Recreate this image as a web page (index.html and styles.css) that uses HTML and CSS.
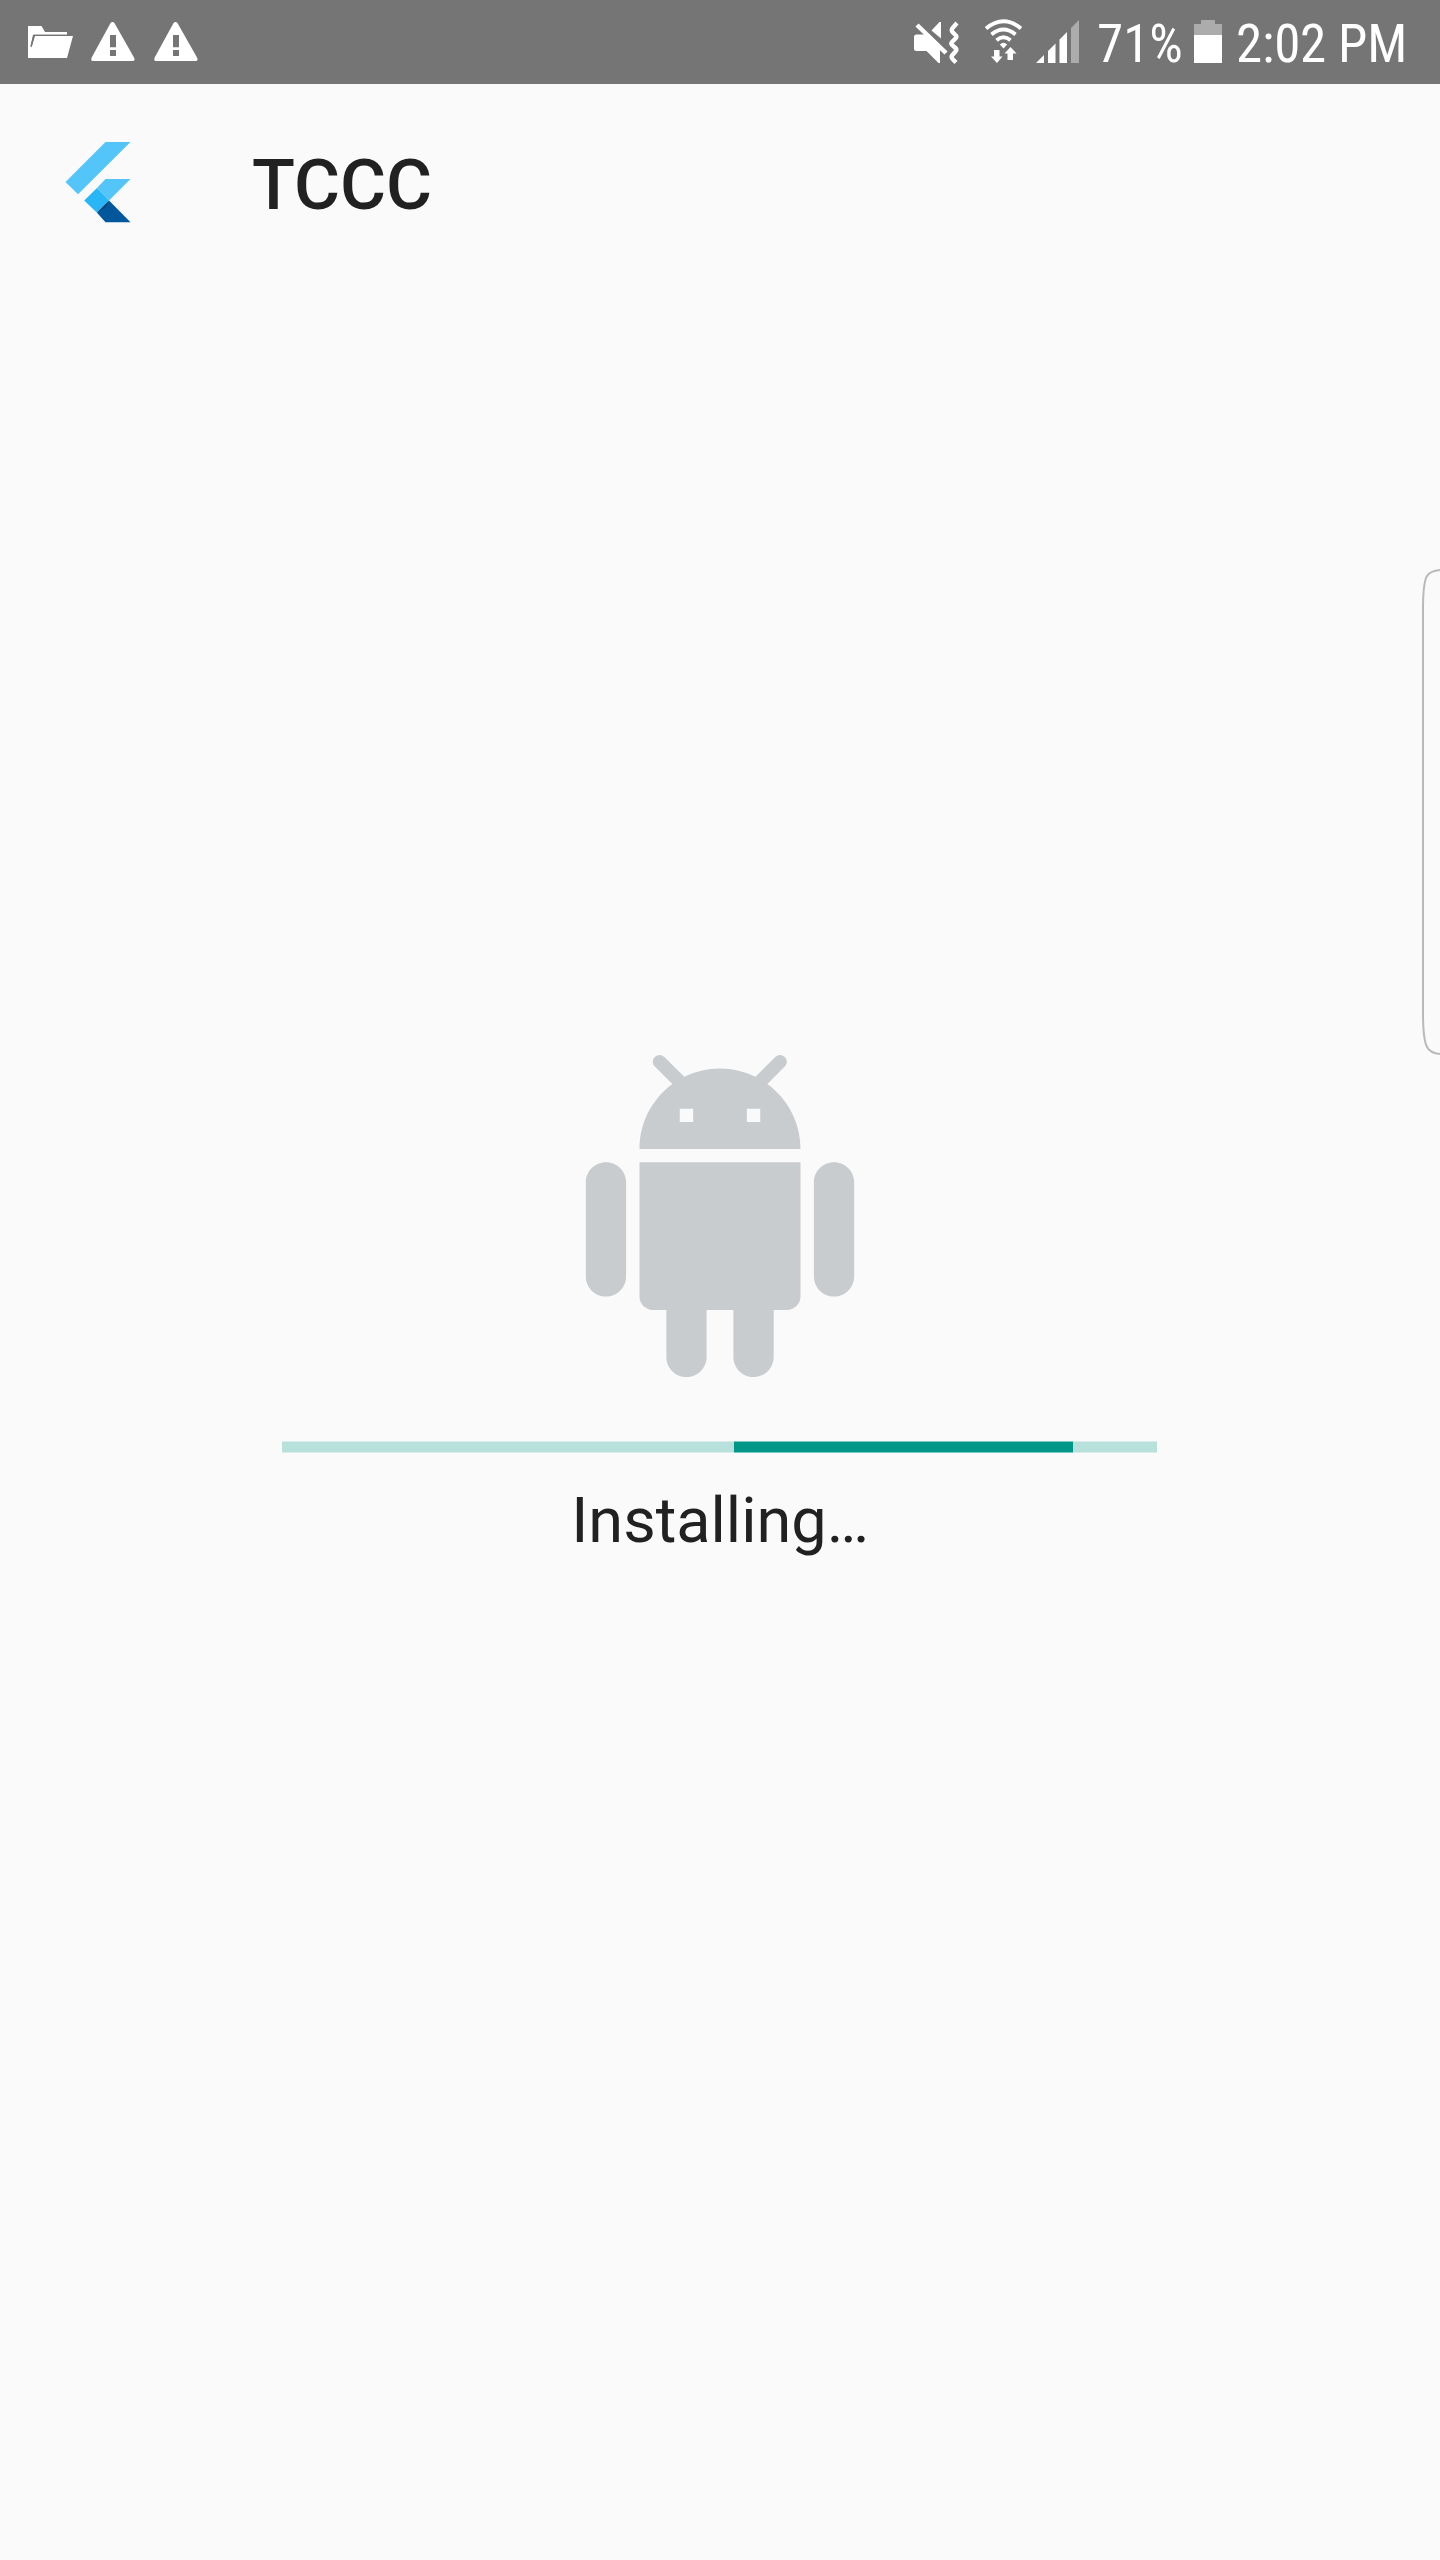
FILE: index.html
```html
<!DOCTYPE html>
<html lang="en">
<head>
<meta charset="utf-8">
<title>TCCC</title>
<link rel="stylesheet" href="styles.css">
</head>
<body>
<div class="screen">
  <header class="status-bar">
    <div class="notifications">
      <svg width="46" height="34" viewBox="28 25 46 34" fill="#fff"><path d="M28 26H41.5L45 32H67V34.8H33L30.5 46H32L35 36H73L67 58H28Z"/><path d="M34 35.3H67M34 35.3L31 47" fill="none" stroke="#757575" stroke-width="1.2"/></svg>
      <svg width="44" height="40" viewBox="0 0 44 40"><path d="M19.3 1.5Q21.5-1.300 23.700 1.500L43 35.500Q44.500 39 41.500 39H2Q-.5 39 .7 35.500Z" fill="#fff"/><path d="M19 13h6v12.300h-6zM19 28h6v6h-6z" fill="#757575"/></svg>
      <svg width="44" height="40" viewBox="0 0 44 40"><path d="M19.3 1.5Q21.5-1.300 23.700 1.500L43 35.500Q44.500 39 41.500 39H2Q-.5 39 .7 35.500Z" fill="#fff"/><path d="M19 13h6v12.300h-6zM19 28h6v6h-6z" fill="#757575"/></svg>
    </div>
    <div class="indicators">
      <svg class="mute" width="46" height="44" viewBox="914 20 46 44"><path d="M914 37Q914 34.500 916.500 34.500H925L940 49V63H938.500L926.500 51H916.500Q914 51 914 48.500ZM931.500 30.500L939.500 22H941V38.500Z" fill="#fff"/><path d="M917 25L946 53" stroke="#fff" stroke-width="4.500"/><path d="M957 23L952.500 28Q951 30 952.500 32L956 35.500Q957 37 955.500 38.500L952 42Q950.500 43.500 952.500 45.500L956 48.500Q957 50 955.500 51.500L952 55.500Q951 57.500 952.500 59L956 62.500" fill="none" stroke="#fff" stroke-width="4.300"/></svg>
      <svg class="wifi" width="38" height="46" viewBox="984 18 38 46"><g fill="none" stroke="#fff" stroke-width="3.800"><path d="M986 28.500Q1003.500 14 1021 28.500"/><path d="M991.500 34.500Q1003.500 24.500 1015.500 34.500"/><path d="M996.500 40.200Q1003.500 34.200 1010.500 40.200"/></g><path d="M999.800 44.500Q1003.500 41 1007.200 44.500L1003.500 48.500ZM994 50H999.500V56.500H1002.500L997 63L991 56.500H994ZM1010.500 47L1016.500 53.500H1013V60H1007.500V53.500H1004.500Z" fill="#fff"/></svg>
      <svg class="signal" width="44" height="44" viewBox="1036 19 44 44" fill="#fff"><path d="M1036 63L1044 55V63ZM1048 51L1055.500 43.500V63H1048ZM1059.500 39.500L1067 32V63H1059.500Z"/><path d="M1071 28L1079 20V63H1071Z" fill="#acacac"/></svg>
      <span class="status-text percent">71%</span>
      <svg class="battery" width="28" height="43" viewBox="0 0 28 43"><path d="M7 0H21V4H28V15H0V4H7Z" fill="#acacac"/><path d="M0 15H28V43H0Z" fill="#fff"/></svg>
      <span class="status-text clock">2:02 PM</span>
    </div>
  </header>
  <div class="title-bar">
    <svg width="66" height="82" viewBox="65 141 66 82"><path d="M105.500 142H130.500L78 194.300L65.500 182ZM105.500 179H130.500L109 200.500L97 188Z" fill="#54c5f8"/><path d="M97 188L109 200.500L97 212.700L84.200 200.500Z" fill="#29b6f6"/><path d="M109 200.500L130.500 222.200H105.500L97 212.700Z" fill="#01579b"/><path d="M97 212.700L108 201.700L106 207Z" fill="#0d3f70"/></svg>
    <h1 class="app-name">TCCC</h1>
  </div>
  <main class="content">
    <svg class="robot" viewBox="0 0 24 24" fill="#c8ccce"><path d="M6 18c0 .55.45 1 1 1h1v3.500c0 .83.67 1.500 1.500 1.500s1.500-.67 1.500-1.500V19h2v3.500c0 .83.67 1.500 1.500 1.500s1.500-.67 1.500-1.500V19h1c.55 0 1-.45 1-1V8H6v10zM3.500 8C2.670 8 2 8.670 2 9.500v7c0 .83.67 1.500 1.500 1.500S5 17.330 5 16.500v-7C5 8.670 4.330 8 3.500 8zm17 0c-.83 0-1.500.67-1.500 1.500v7c0 .83.67 1.500 1.500 1.500s1.500-.67 1.500-1.500v-7c0-.83-.67-1.500-1.500-1.500zm-4.970-5.840l1.300-1.300c.2-.2.2-.51 0-.71-.2-.2-.51-.2-.71 0l-1.480 1.480C13.850 1.230 12.950 1 12 1c-.96 0-1.860.23-2.660.63L7.850.15c-.2-.2-.51-.2-.71 0-.2.2-.2.51 0 .71l1.310 1.310C6.970 3.260 6 5.010 6 7h12c0-1.990-.97-3.750-2.470-4.840zM10 5H9V4h1v1zm5 0h-1V4h1v1z"/></svg>
    <div class="progress"><div class="progress-value"></div></div>
    <p class="message">Installing…</p>
  </main>
  <svg class="edge-handle" width="20" height="490" viewBox="0 0 20 490"><path d="M20 3Q10 4 7 9Q3 16 3 42V446Q3 472 7 480Q10 486 20 487" fill="none" stroke="#b9b9b9" stroke-width="2"/></svg>
</div>
</body>
</html>
```
FILE: styles.css
```css
body {
  margin: 0;
  background: #fafafa;
  font-family: Roboto, "Liberation Sans", sans-serif;
  color: #212121;
}

svg {
  display: block;
  flex: none;
}

.screen {
  position: relative;
  width: 1440px;
  height: 2560px;
  overflow: hidden;
}

.status-bar {
  display: flex;
  justify-content: space-between;
  box-sizing: border-box;
  height: 84px;
  padding: 0 36px 0 28px;
  background: #757575;
}

.notifications {
  display: flex;
  align-items: center;
  gap: 19px;
}

.notifications svg:first-child { margin-right: -2px; }

.indicators {
  display: flex;
  align-items: flex-start;
  color: #fff;
}

.mute { margin-top: 20px; }
.wifi { margin: 18px 0 0 24px; }
.signal { margin: 19px 17px 0 14px; }
.battery { margin: 20px 14px 0 12px; }

.status-text {
  font-family: "Roboto Condensed", Roboto, sans-serif;
  font-stretch: 75%;
  font-size: 53px;
  line-height: 88px;
  white-space: nowrap;
}

.percent { width: 85px; }
.clock { width: 168px; letter-spacing: -0.2px; }

.title-bar {
  display: flex;
  align-items: center;
  gap: 121px;
  height: 196px;
  padding-left: 65px;
}

.app-name {
  margin: 6px 0 0;
  font-size: 70.5px;
  font-weight: 500;
  line-height: 82px;
}

.content {
  display: flex;
  flex-direction: column;
  align-items: center;
  padding-top: 775px;
}

.robot {
  width: 322px;
  height: 322px;
}

.progress {
  box-sizing: border-box;
  width: 875px;
  height: 12px;
  margin: 64px 1px 0 0;
  border: solid #d9edeb;
  border-width: 1px 0;
  background: #b9e1dc;
}

.progress-value {
  box-sizing: border-box;
  width: 339px;
  height: 12px;
  margin: -1px 0 0 452px;
  border: solid #7cc9c1;
  border-width: 1px 0;
  background: #009688;
}

.message {
  margin: 30px 0 0;
  font-size: 63px;
  line-height: 76px;
}

.edge-handle {
  position: absolute;
  top: 567px;
  right: 0;
}
```
